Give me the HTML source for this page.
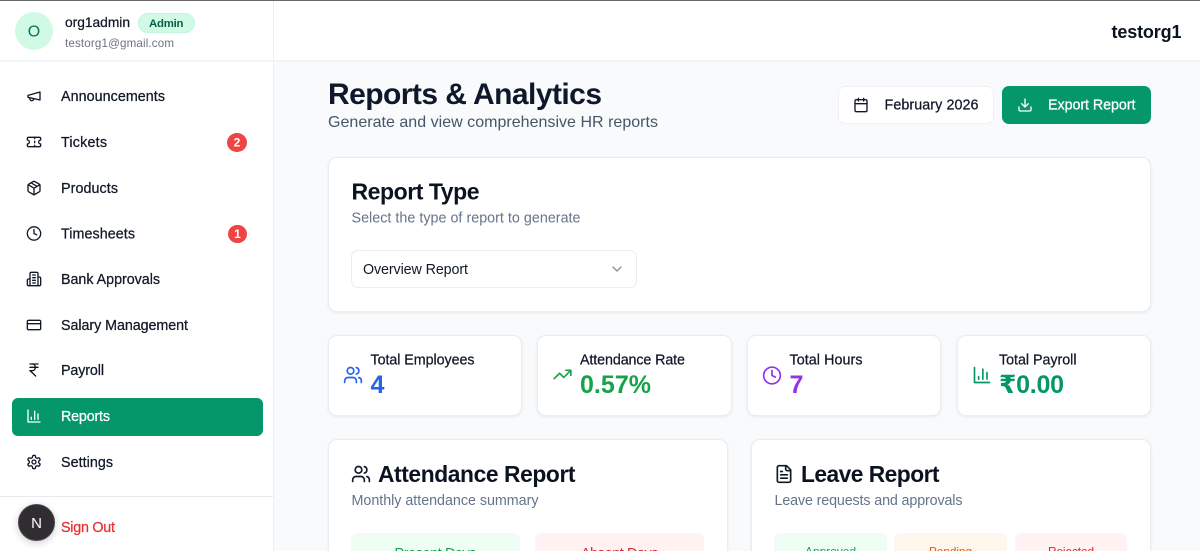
<!DOCTYPE html>
<html lang="en">
<head>
<meta charset="utf-8">
<title>Reports &amp; Analytics</title>
<style>
html,body{margin:0;padding:0;width:1200px;height:551px;overflow:hidden;background:#f8fafc;font-family:"Liberation Sans",sans-serif}
#wrap{position:relative;width:1200px;height:551px;overflow:hidden;background:#f8fafc}
.b{position:absolute;box-sizing:border-box}
.card{background:#fff;border:1px solid #e9edf2;border-radius:9px;box-shadow:0 1px 3px rgba(15,23,42,.07)}
.open{border-bottom:0;border-radius:9px 9px 0 0}
svg.o{position:absolute;left:0;top:0;overflow:hidden}
text{font-family:"Liberation Sans",sans-serif;font-size:14.3px;fill:#111827}
.m{stroke-width:.25px;stroke:currentColor;paint-order:stroke}
.n{color:#111827}
.i{fill:none;stroke:#111827;stroke-width:2;stroke-linecap:round;stroke-linejoin:round}
</style>
</head>
<body>
<div id="wrap">
<div class="b" style="left:0;top:0;width:273px;height:551px;background:#fff"></div>
<div class="b" style="left:273px;top:0;width:1px;height:551px;background:#eceff3"></div>
<div class="b" style="left:274px;top:0;width:926px;height:61px;background:#fff"></div>
<div class="b" style="left:0;top:60px;width:1200px;height:2px;background:#f1f4f8"></div>
<div class="b" style="left:0;top:0;width:1200px;height:1px;background:#696969"></div>
<div class="b" style="left:0;top:496px;width:273px;height:1px;background:#e7eaee"></div>

<div class="b" style="left:15px;top:12px;width:38px;height:38px;border-radius:50%;background:#d1fae5"></div>
<div class="b" style="left:138px;top:13px;width:57px;height:20px;border-radius:10px;background:#d1fae5;border:1px solid #c3f5dc"></div>
<div class="b" style="left:11.5px;top:397.5px;width:251px;height:38px;border-radius:6px;background:#059669"></div>
<div class="b" style="left:227px;top:133px;width:20px;height:19px;border-radius:50%;background:#ef4444"></div>
<div class="b" style="left:228px;top:224.5px;width:19px;height:18.5px;border-radius:50%;background:#ef4444"></div>

<div class="b" style="left:838px;top:86px;width:156px;height:38px;border-radius:7px;background:#fff;border:1px solid #eef1f5"></div>
<div class="b" style="left:1002px;top:86px;width:149px;height:38px;border-radius:7px;background:#059669"></div>

<div class="b card" style="left:328px;top:157px;width:823px;height:155px"></div>
<div class="b" style="left:351px;top:250px;width:286px;height:38px;border-radius:7px;background:#fff;border:1px solid #e9edf2"></div>

<div class="b card" style="left:328px;top:335px;width:194px;height:81px"></div>
<div class="b card" style="left:537px;top:335px;width:195px;height:81px"></div>
<div class="b card" style="left:747px;top:335px;width:194px;height:81px"></div>
<div class="b card" style="left:957px;top:335px;width:194px;height:81px"></div>

<div class="b card open" style="left:328px;top:439px;width:400px;height:112px"></div>
<div class="b card open" style="left:751px;top:439px;width:400px;height:112px"></div>

<div class="b" style="left:351px;top:533px;width:169px;height:18px;border-radius:6px 6px 0 0;background:#f0fdf4"></div>
<div class="b" style="left:535px;top:533px;width:169px;height:18px;border-radius:6px 6px 0 0;background:#fef2f2"></div>
<div class="b" style="left:774px;top:533px;width:113px;height:18px;border-radius:6px 6px 0 0;background:#f0fdf4"></div>
<div class="b" style="left:894px;top:533px;width:113px;height:18px;border-radius:6px 6px 0 0;background:#fff7ed"></div>
<div class="b" style="left:1015px;top:533px;width:112px;height:18px;border-radius:6px 6px 0 0;background:#fef2f2"></div>

<div class="b" style="left:18px;top:503.5px;width:37px;height:37px;border-radius:50%;background:#2f2d30;border:1px solid #4a484b;box-shadow:0 2px 8px rgba(0,0,0,.2)"></div>

<svg class="o" width="1200" height="551" viewBox="0 0 1200 551" xmlns="http://www.w3.org/2000/svg">
<defs>
<symbol id="megaphone" viewBox="0 0 24 24"><path d="m3 11 18-5v12L3 14v-3z"/><path d="M11.6 16.8a3 3 0 1 1-5.8-1.6"/></symbol>
<symbol id="ticket" viewBox="0 0 24 24"><path d="M2 9a3 3 0 0 1 0 6v2a2 2 0 0 0 2 2h16a2 2 0 0 0 2-2v-2a3 3 0 0 1 0-6V7a2 2 0 0 0-2-2H4a2 2 0 0 0-2 2Z"/><path d="M13 5v2"/><path d="M13 17v2"/><path d="M13 11v2"/></symbol>
<symbol id="package" viewBox="0 0 24 24"><path d="M11 21.73a2 2 0 0 0 2 0l7-4A2 2 0 0 0 21 16V8a2 2 0 0 0-1-1.73l-7-4a2 2 0 0 0-2 0l-7 4A2 2 0 0 0 3 8v8a2 2 0 0 0 1 1.73z"/><path d="M12 22V12"/><path d="m3.3 7 7.703 4.734a2 2 0 0 0 1.994 0L20.7 7"/><path d="m7.5 4.27 9 5.15"/></symbol>
<symbol id="clock" viewBox="0 0 24 24"><circle cx="12" cy="12" r="10"/><polyline points="12 6 12 12 16 14"/></symbol>
<symbol id="building" viewBox="0 0 24 24"><path d="M6 22V4a2 2 0 0 1 2-2h8a2 2 0 0 1 2 2v18Z"/><path d="M6 12H4a2 2 0 0 0-2 2v6a2 2 0 0 0 2 2h2"/><path d="M18 9h2a2 2 0 0 1 2 2v9a2 2 0 0 1-2 2h-2"/><path d="M10 6h4"/><path d="M10 10h4"/><path d="M10 14h4"/><path d="M10 18h4"/></symbol>
<symbol id="card" viewBox="0 0 24 24"><rect x="2" y="5" width="20" height="14" rx="2"/><line x1="2" y1="10" x2="22" y2="10"/></symbol>
<symbol id="rupee" viewBox="0 0 24 24"><path d="M6 3h12"/><path d="M6 8h12"/><path d="m6 13 8.5 8"/><path d="M6 13h3"/><path d="M9 13c6.667 0 6.667-10 0-10"/></symbol>
<symbol id="chart" viewBox="0 0 24 24"><path d="M3 3v18h18"/><path d="M18 17V9"/><path d="M13 17V5"/><path d="M8 17v-3"/></symbol>
<symbol id="gear" viewBox="0 0 24 24"><path d="M12.22 2h-.44a2 2 0 0 0-2 2v.18a2 2 0 0 1-1 1.73l-.43.25a2 2 0 0 1-2 0l-.15-.08a2 2 0 0 0-2.73.73l-.22.38a2 2 0 0 0 .73 2.73l.15.1a2 2 0 0 1 1 1.72v.51a2 2 0 0 1-1 1.74l-.15.09a2 2 0 0 0-.73 2.73l.22.38a2 2 0 0 0 2.73.73l.15-.08a2 2 0 0 1 2 0l.43.25a2 2 0 0 1 1 1.73V20a2 2 0 0 0 2 2h.44a2 2 0 0 0 2-2v-.18a2 2 0 0 1 1-1.73l.43-.25a2 2 0 0 1 2 0l.15.08a2 2 0 0 0 2.73-.73l.22-.39a2 2 0 0 0-.73-2.73l-.15-.08a2 2 0 0 1-1-1.74v-.5a2 2 0 0 1 1-1.74l.15-.09a2 2 0 0 0 .73-2.73l-.22-.38a2 2 0 0 0-2.73-.73l-.15.08a2 2 0 0 1-2 0l-.43-.25a2 2 0 0 1-1-1.73V4a2 2 0 0 0-2-2z"/><circle cx="12" cy="12" r="3"/></symbol>
<symbol id="users" viewBox="0 0 24 24"><path d="M16 21v-2a4 4 0 0 0-4-4H6a4 4 0 0 0-4 4v2"/><circle cx="9" cy="7" r="4"/><path d="M22 21v-2a4 4 0 0 0-3-3.87"/><path d="M16 3.13a4 4 0 0 1 0 7.75"/></symbol>
<symbol id="trend" viewBox="0 0 24 24"><polyline points="22 7 13.5 15.5 8.5 10.5 2 17"/><polyline points="16 7 22 7 22 13"/></symbol>
<symbol id="calendar" viewBox="0 0 24 24"><path d="M8 2v4"/><path d="M16 2v4"/><rect x="3" y="4" width="18" height="18" rx="2"/><path d="M3 10h18"/></symbol>
<symbol id="download" viewBox="0 0 24 24"><path d="M21 15v4a2 2 0 0 1-2 2H5a2 2 0 0 1-2-2v-4"/><polyline points="7 10 12 15 17 10"/><line x1="12" y1="15" x2="12" y2="3"/></symbol>
<symbol id="chevron" viewBox="0 0 24 24"><path d="m6 9 6 6 6-6"/></symbol>
<symbol id="file" viewBox="0 0 24 24"><path d="M15 2H6a2 2 0 0 0-2 2v16a2 2 0 0 0 2 2h12a2 2 0 0 0 2-2V7Z"/><path d="M14 2v4a2 2 0 0 0 2 2h4"/><path d="M10 9H8"/><path d="M16 13H8"/><path d="M16 17H8"/></symbol>
</defs>

<!-- sidebar icons -->
<use href="#megaphone" class="i" x="26" y="88" width="16" height="16"/>
<use href="#ticket" class="i" x="26" y="134" width="16" height="16"/>
<use href="#package" class="i" x="26" y="180" width="16" height="16"/>
<use href="#clock" class="i" x="26" y="225.5" width="16" height="16"/>
<use href="#building" class="i" x="26" y="271" width="16" height="16"/>
<use href="#card" class="i" x="26" y="317" width="16" height="16"/>
<use href="#rupee" class="i" x="26" y="362" width="16" height="16"/>
<use href="#chart" class="i" style="stroke:#fff" x="26" y="408" width="16" height="16"/>
<use href="#gear" class="i" x="26" y="454" width="16" height="16"/>

<!-- sidebar text -->
<text x="34" y="36.5" text-anchor="middle" style="font-size:16px;fill:#047857">O</text>
<text x="65" y="27" textLength="65" lengthAdjust="spacing" class="m n" style="font-size:13.8px">org1admin</text>
<text x="149" y="27" textLength="34.5" lengthAdjust="spacing" font-weight="700" style="font-size:11.4px;fill:#065f46">Admin</text>
<text x="65" y="47" textLength="109" lengthAdjust="spacing" style="font-size:11.6px;fill:#6b7280">testorg1@gmail.com</text>

<text x="61" y="101" textLength="104" lengthAdjust="spacing" class="m n">Announcements</text>
<text x="61" y="147" textLength="46" lengthAdjust="spacing" class="m n">Tickets</text>
<text x="61" y="193" textLength="57" lengthAdjust="spacing" class="m n">Products</text>
<text x="61" y="238.5" textLength="74" lengthAdjust="spacing" class="m n">Timesheets</text>
<text x="61" y="284" textLength="99" lengthAdjust="spacing" class="m n">Bank Approvals</text>
<text x="61" y="330" textLength="127" lengthAdjust="spacing" class="m n">Salary Management</text>
<text x="61" y="375" textLength="43" lengthAdjust="spacing" class="m n">Payroll</text>
<text x="61" y="421" textLength="49" lengthAdjust="spacing" class="m" style="fill:#fff;color:#fff">Reports</text>
<text x="61" y="467" textLength="52" lengthAdjust="spacing" class="m n">Settings</text>
<text x="61" y="532" textLength="54" lengthAdjust="spacing" class="m" style="fill:#e5302e;color:#e5302e">Sign Out</text>
<text x="237" y="146.5" text-anchor="middle" font-weight="700" style="font-size:12px;fill:#fff">2</text>
<text x="237.5" y="238" text-anchor="middle" font-weight="700" style="font-size:12px;fill:#fff">1</text>
<text x="36.5" y="528" text-anchor="middle" style="font-size:15px;fill:#fff">N</text>

<!-- header -->
<text x="1111.5" y="38" textLength="70" lengthAdjust="spacing" font-weight="700" style="font-size:18px;fill:#0b1220">testorg1</text>
<text x="328" y="104" textLength="274" lengthAdjust="spacing" font-weight="700" style="font-size:30px;fill:#0f172a">Reports &amp; Analytics</text>
<text x="328" y="127" textLength="330" lengthAdjust="spacing" style="font-size:16px;fill:#475569">Generate and view comprehensive HR reports</text>

<use href="#calendar" class="i" x="853" y="97" width="16" height="16"/>
<text x="884.5" y="109.5" textLength="94" lengthAdjust="spacing" class="m n">February 2026</text>
<use href="#download" class="i" style="stroke:#fff" x="1017" y="97" width="16" height="16"/>
<text x="1048" y="109.5" textLength="87.5" lengthAdjust="spacing" class="m" style="fill:#fff;color:#fff">Export Report</text>

<!-- report type -->
<text x="351.5" y="199.5" textLength="128" lengthAdjust="spacing" font-weight="700" style="font-size:23px;fill:#0b1220">Report Type</text>
<text x="351.5" y="222.5" textLength="229" lengthAdjust="spacing" style="fill:#64748b">Select the type of report to generate</text>
<text x="363" y="274" textLength="105" lengthAdjust="spacing" style="fill:#111827">Overview Report</text>
<use href="#chevron" class="i" style="stroke:#8a8f98" x="609" y="261" width="16" height="16"/>

<!-- stats -->
<use href="#users" class="i" style="stroke:#2563eb" x="343" y="365" width="20" height="20"/>
<text x="370.5" y="364.5" textLength="104" lengthAdjust="spacing" class="m n">Total Employees</text>
<text x="370.5" y="393" font-weight="700" textLength="14" lengthAdjust="spacing" style="font-size:25px;fill:#2563eb">4</text>

<use href="#trend" class="i" style="stroke:#16a34a" x="552.5" y="364.5" width="20" height="20"/>
<text x="580" y="364.5" textLength="105" lengthAdjust="spacing" class="m n">Attendance Rate</text>
<text x="580" y="393" font-weight="700" textLength="71" lengthAdjust="spacing" style="font-size:25px;fill:#16a34a">0.57%</text>

<use href="#clock" class="i" style="stroke:#9333ea" x="762" y="365.5" width="20" height="20"/>
<text x="789.5" y="364.5" textLength="73" lengthAdjust="spacing" class="m n">Total Hours</text>
<text x="789.5" y="393" font-weight="700" textLength="12.5" lengthAdjust="spacing" style="font-size:25px;fill:#9333ea">7</text>

<use href="#chart" class="i" style="stroke:#059669" x="972" y="365" width="20" height="20"/>
<text x="999" y="364.5" textLength="77.5" lengthAdjust="spacing" class="m n">Total Payroll</text>
<text x="999" y="393" font-weight="700" textLength="65" lengthAdjust="spacing" style="font-size:25px;fill:#059669;font-family:'Liberation Sans','DejaVu Sans',sans-serif">₹0.00</text>

<!-- attendance -->
<use href="#users" class="i" x="351" y="464" width="20" height="20"/>
<text x="378" y="482" textLength="197.5" lengthAdjust="spacing" font-weight="700" style="font-size:22.8px;fill:#0b1220">Attendance Report</text>
<text x="351.5" y="505" textLength="187" lengthAdjust="spacing" style="fill:#64748b">Monthly attendance summary</text>
<text x="394.5" y="558" textLength="82" lengthAdjust="spacing" style="fill:#16a34a">Present Days</text>
<text x="581" y="558" textLength="77.5" lengthAdjust="spacing" style="fill:#dc2626">Absent Days</text>

<!-- leave -->
<use href="#file" class="i" x="774" y="464" width="20" height="20"/>
<text x="801" y="482" textLength="138.5" lengthAdjust="spacing" font-weight="700" style="font-size:22.8px;fill:#0b1220">Leave Report</text>
<text x="774.5" y="505" textLength="188" lengthAdjust="spacing" style="fill:#64748b">Leave requests and approvals</text>
<text x="805" y="555.5" textLength="51" lengthAdjust="spacing" style="font-size:11.8px;fill:#16a34a">Approved</text>
<text x="929" y="555.5" textLength="43" lengthAdjust="spacing" style="font-size:11.8px;fill:#ea580c">Pending</text>
<text x="1048" y="555.5" textLength="46" lengthAdjust="spacing" style="font-size:11.8px;fill:#dc2626">Rejected</text>
</svg>
</div>
</body>
</html>
